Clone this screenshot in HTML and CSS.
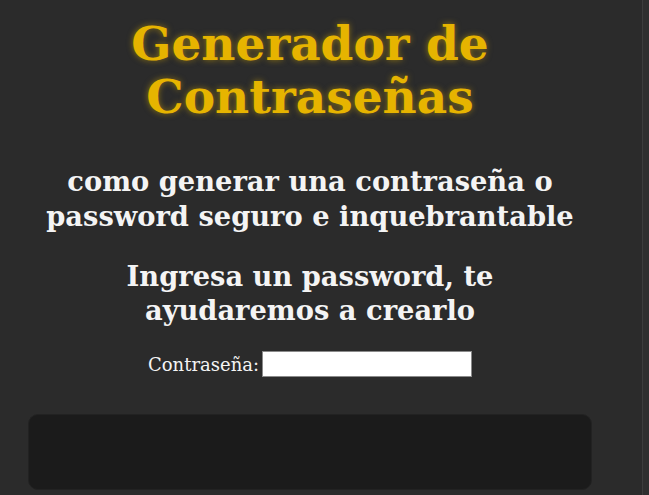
FILE: index.html
```html
<!DOCTYPE html>
<html lang="es">
<head>
<meta charset="utf-8">
<title>Generador de Contraseñas</title>
<link rel="stylesheet" href="styles.css">
</head>
<body>
<div class="frame">
  <main class="page">
    <h1 class="title">Generador de Contraseñas</h1>
    <h2 class="subtitle">como generar una contraseña o password seguro e inquebrantable</h2>
    <h2 class="prompt">Ingresa un password, te ayudaremos a crearlo</h2>
    <form class="form">
      <label class="label" for="pw">Contraseña:</label>
      <input class="input" id="pw" type="text">
    </form>
    <section class="result"></section>
  </main>
  <div class="rail"></div>
</div>
</body>
</html>
```
FILE: styles.css
```css
html {
  background: #2b2b2b;
}
body {
  margin: 0;
  font-family: "DejaVu Serif", Georgia, serif;
  color: #f4f4f4;
}
.frame {
  display: flex;
  min-height: 100vh;
}
.page {
  flex: 1;
  text-align: center;
  padding: 17px 22px 6px 0;
}
.rail {
  width: 6px;
  background: #2f2f2f;
  border-left: 1px solid #3d3d3d;
}
.title {
  margin: 0 auto;
  width: 440px;
  font-size: 47px;
  line-height: 53px;
  font-weight: bold;
  color: #e6b400;
  text-shadow: 0 0 6px rgba(230, 180, 0, 0.55);
}
.subtitle {
  margin: 41px auto 0;
  width: 560px;
  font-size: 27.3px;
  line-height: 35px;
  font-weight: bold;
}
.prompt {
  margin: 25px auto 0;
  width: 420px;
  font-size: 27.3px;
  line-height: 34px;
  font-weight: bold;
}
.form {
  margin: 24px 0 0;
  display: flex;
  justify-content: center;
  align-items: center;
  gap: 3px;
}
.label {
  font-size: 18px;
  color: #f4f4f4;
}
.input {
  width: 208px;
  height: 24px;
  padding: 0;
  border: 1px solid #8a8a8a;
  background: #fff;
}
.result {
  margin: 37px 28px 0;
  height: 74px;
  background: #1b1b1b;
  border: 1px solid #222;
  border-radius: 10px;
}
```
